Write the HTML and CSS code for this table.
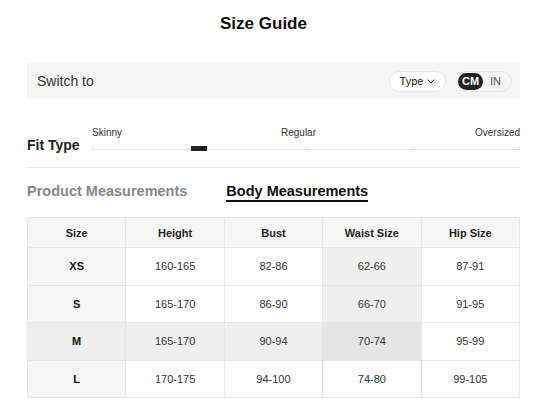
FILE: index.html
```html
<!DOCTYPE html>
<html>
<head>
<meta charset="utf-8">
<link rel="stylesheet" href="styles.css">
</head>
<body>
<div class="page">
  <h1 class="title">Size Guide</h1>
  <div class="switchbar">
    <span class="switch-label">Switch to</span>
    <div class="switch-controls">
      <div class="type-pill">Type <svg class="chev" width="8" height="5" viewBox="0 0 8 5"><path d="M0.5 0.5 L4 4 L7.5 0.5" fill="none" stroke="#333" stroke-width="1"/></svg></div>
      <div class="unit-toggle">
        <span class="unit active">CM</span>
        <span class="unit">IN</span>
      </div>
    </div>
  </div>
  <div class="fit">
    <div class="fit-label">Fit Type</div>
    <div class="slider">
      <div class="slider-labels">
        <span>Skinny</span><span>Regular</span><span>Oversized</span>
      </div>
      <div class="rail">
        <div class="rail-line"></div>
        <div class="tick t0"></div>
        <div class="tick t50"></div>
        <div class="tick t75"></div>
        <div class="tick t100"></div>
        <div class="knob"></div>
      </div>
    </div>
  </div>
  <div class="divider"></div>
  <div class="tabs">
    <span class="tab">Product Measurements</span>
    <span class="tab active">Body Measurements</span>
  </div>
  <table class="sizes">
    <thead>
      <tr><th>Size</th><th>Height</th><th>Bust</th><th>Waist Size</th><th>Hip Size</th></tr>
    </thead>
    <tbody>
      <tr><td class="sz">XS</td><td>160-165</td><td>82-86</td><td class="hl">62-66</td><td>87-91</td></tr>
      <tr><td class="sz">S</td><td>165-170</td><td>86-90</td><td class="hl">66-70</td><td>91-95</td></tr>
      <tr><td class="sz hl">M</td><td class="hl">165-170</td><td class="hl">90-94</td><td class="hl2">70-74</td><td>95-99</td></tr>
      <tr><td class="sz">L</td><td>170-175</td><td>94-100</td><td>74-80</td><td>99-105</td></tr>
    </tbody>
  </table>
</div>
</body>
</html>
```
FILE: styles.css
```css
html, body { margin: 0; padding: 0; background: #fff; }
body { font-family: "Liberation Sans", Arial, sans-serif; color: #222; }
.page { margin-left: 27px; width: 493px; }
.title { margin: 0; height: 45px; line-height: 47px; font-size: 17px; font-weight: bold; text-align: center; padding-right: 20px; color: #111; }
.switchbar { margin-top: 18px; height: 36px; background: #f5f5f5; display: flex; align-items: center; justify-content: space-between; padding: 0 8px 0 10px; }
.switch-label { font-size: 14px; color: #333; }
.switch-controls { display: flex; align-items: center; gap: 10px; }
.type-pill { height: 19px; width: 55px; box-sizing: content-box; border: 1px solid #e6e6e6; border-radius: 11px; background: #fff; font-size: 11px; color: #222; display: flex; align-items: center; justify-content: center; gap: 4px; }
.chev { display: block; margin-top: 1px; }
.unit-toggle { height: 19px; border: 1px solid #e6e6e6; border-radius: 11px; background: #f5f5f5; display: flex; align-items: center; padding: 0 2px 0 1px; width: 51px; }
.unit { font-size: 11px; color: #555; width: 25px; text-align: center; line-height: 17px; }
.unit.active { background: #222; color: #fff; font-weight: bold; border-radius: 9px; }
.fit { display: flex; align-items: flex-end; margin-top: 28px; }
.fit-label { width: 65px; font-size: 14px; font-weight: bold; line-height: 16px; color: #222; margin-bottom: -1px; }
.slider { flex: 1; }
.slider-labels { display: flex; justify-content: space-between; font-size: 10px; line-height: 12px; color: #333; }
.rail { position: relative; height: 6px; margin-top: 7px; }
.rail-line { position: absolute; left: 0; right: 0; top: 3px; height: 1px; background: #e3e3e3; }
.tick { position: absolute; top: 0; width: 1px; height: 4px; background: #e3e3e3; }
.t0 { left: 0; }
.t50 { left: 50%; }
.t75 { left: 75%; }
.t100 { right: 0; }
.knob { position: absolute; left: 99px; top: 0; width: 16px; height: 5px; background: #222; }
.divider { margin-top: 15px; height: 1px; background: #e8e8e8; }
.tabs { margin-top: 15px; display: flex; gap: 39px; }
.tab { font-size: 14.5px; font-weight: bold; line-height: 16px; color: #888; padding-bottom: 1px; border-bottom: 2px solid transparent; }
.tab.active { color: #111; border-bottom-color: #111; }
.sizes { margin-top: 15px; width: 493px; table-layout: fixed; border-collapse: collapse; font-size: 11px; }
.sizes th, .sizes td { border: 1px solid #e6e6e6; text-align: center; padding: 0; }
.sizes th { height: 29px; background: #f6f6f6; font-weight: bold; color: #222; }
.sizes td { height: 36.5px; color: #333; background: #fff; }
.sizes td.sz { background: #f6f6f6; font-weight: bold; color: #111; }
.sizes td.hl { background: #efefef; }
.sizes td.hl2 { background: #e5e5e5; }
```
